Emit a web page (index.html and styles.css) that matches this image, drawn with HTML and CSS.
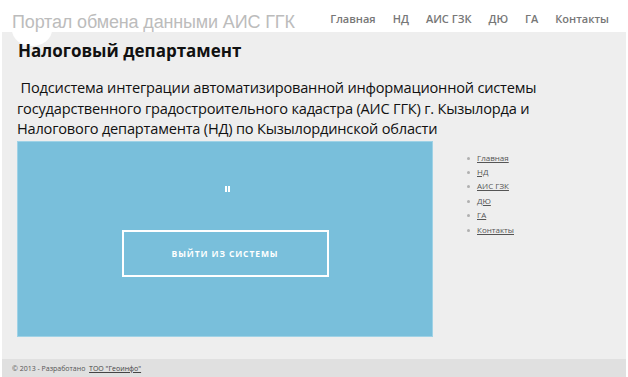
FILE: index.html
```html
<!DOCTYPE html>
<html lang="ru">

<head>
	<meta charset="UTF-8">
	<meta name="viewport" content="width=device-width, initial-scale=1.0">
	<title>Портал обмена данными АИС ГГК</title>
	<link rel="stylesheet" href="styles.css">
</head>

<body>
	<div class="header">
		<div class="site-title">Портал обмена данными АИС ГГК</div>
		<ul class="menu">
			<li><a href="#">Главная</a></li>
			<li><a href="#">НД</a></li>
			<li><a href="#">АИС ГЗК</a></li>
			<li><a href="#">ДЮ</a></li>
			<li><a href="#">ГА</a></li>
			<li><a href="#">Контакты</a></li>
		</ul>
	</div>

	<div class="main">
		<span class="logo-bump"></span>
		<h1>Налоговый департамент</h1>
		<p class="lead">&nbsp;Подсистема интеграции автоматизированной информационной системы<br>государственного градостроительного кадастра (АИС ГГК) г. Кызылорда и<br>Налогового департамента (НД) по Кызылординской области</p>

		<div class="row">
			<div class="panel">
				<span class="pause"><i></i><i></i></span>
				<a class="logout" href="#">выйти из системы</a>
			</div>
			<ul class="side">
				<li><a href="#">Главная</a></li>
				<li><a href="#">НД</a></li>
				<li><a href="#">АИС ГЗК</a></li>
				<li><a href="#">ДЮ</a></li>
				<li><a href="#">ГА</a></li>
				<li><a href="#">Контакты</a></li>
			</ul>
		</div>
	</div>

	<div class="footer">
		© 2013 - Разработано &nbsp;<a href="#">ТОО "Геоинфо"</a>
	</div>
</body>

</html>
```

FILE: styles.css
```css
body,
ul,
p,
h1 {
	margin: 0;
}

ul {
	padding: 0;
}

body {
	width: 628px;
	height: 377px;
	background: #fff;
	font-family: "Open Sans", "Noto Sans", sans-serif;
	color: #111;
	overflow: hidden;
}

.header {
	position: relative;
	z-index: 1;
	display: flex;
	justify-content: space-between;
	align-items: flex-start;
	height: 32px;
	padding: 0 19px 0 12px;
	background: #fff;
	white-space: nowrap;
}

.site-title {
	font-family: "Liberation Sans", Arial, sans-serif;
	font-size: 18px;
	letter-spacing: -0.15px;
	line-height: 20px;
	margin-top: 12px;
	color: #bcbcbc;
}

.menu {
	display: flex;
	gap: 17px;
	list-style: none;
	margin-top: 10px;
}

.menu li {
	line-height: 15px;
}

.menu a {
	font-size: 11px;
	font-weight: 600;
	color: #777;
	text-decoration: none;
}

.main {
	position: relative;
	margin: 0 2px;
	height: 327px;
	padding: 8px 0 0 15px;
	background: #eeeeee;
	box-sizing: border-box;
}

/* остаток круглого логотипа */
.logo-bump {
	position: absolute;
	left: 10px;
	top: -18px;
	width: 40px;
	height: 32px;
	border-radius: 50%;
	background: #fff;
}

h1 {
	position: relative;
	font-size: 17px;
	font-weight: 700;
	line-height: 22px;
	padding-left: 1px;
}

.lead {
	font-size: 14.6px;
	letter-spacing: -0.2px;
	line-height: 20.5px;
	white-space: nowrap;
	margin-top: 15px;
	color: #111;
}

.row {
	display: flex;
	margin-top: 2px;
}

.panel {
	position: relative;
	display: flex;
	justify-content: center;
	width: 414px;
	height: 194px;
	background: #79bfdb;
	border: 1px solid #9fd2e6;
}

.pause {
	position: absolute;
	left: 207px;
	top: 44px;
	display: flex;
	gap: 1px;
}

.pause i {
	display: block;
	width: 2px;
	height: 6px;
	background: #fff;
}

.logout {
	align-self: flex-start;
	margin-top: 88px;
	width: 203px;
	height: 43px;
	border: 2px solid #fff;
	color: #fff;
	text-decoration: none;
	text-transform: uppercase;
	font-size: 8.5px;
	font-weight: 700;
	letter-spacing: 0.9px;
	line-height: 43px;
	text-align: center;
}

.side {
	list-style: none;
	margin: 10px 0 0 34px;
}

.side li {
	position: relative;
	font-size: 8px;
	line-height: 14.4px;
	padding-left: 10px;
}

.side li::before {
	content: "";
	position: absolute;
	left: 0;
	top: 6px;
	width: 3px;
	height: 3px;
	border-radius: 50%;
	background: #b0b0b0;
}

.side a {
	color: #555;
}

.footer {
	margin: 0 2px;
	height: 18px;
	padding-left: 10px;
	background: #e0e0e0;
	font-size: 7px;
	line-height: 20px;
	color: #555;
}

.footer a {
	color: #444;
}
```
